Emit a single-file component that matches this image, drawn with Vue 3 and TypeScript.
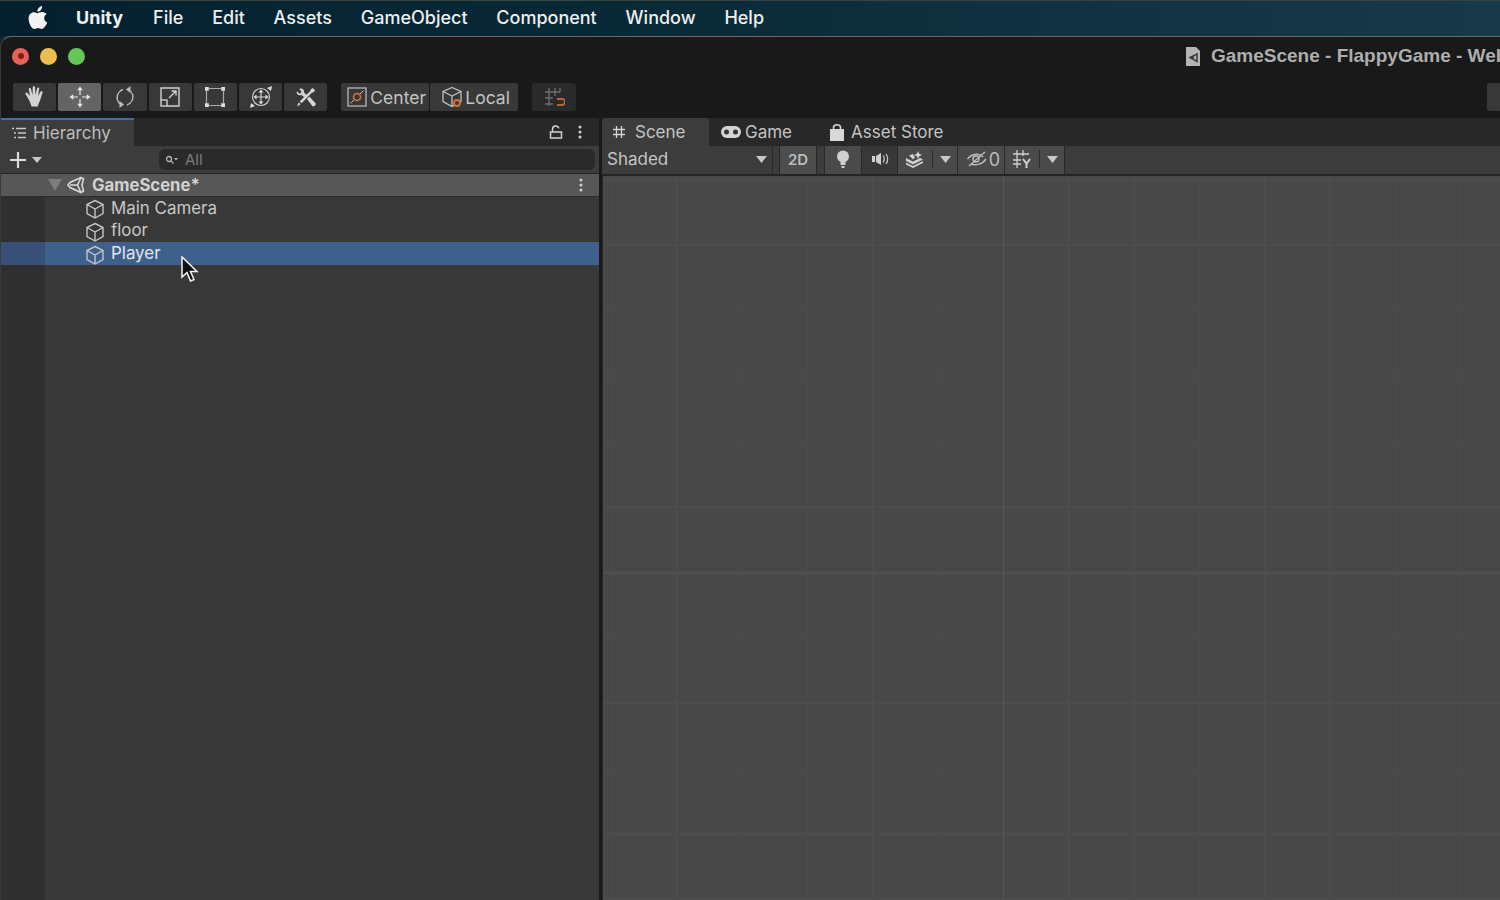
<script setup lang="ts">
const menus: string[] = ['File', 'Edit', 'Assets', 'GameObject', 'Component', 'Window', 'Help']
const rows: { name: string; selected: boolean }[] = [
  { name: 'Main Camera', selected: false },
  { name: 'floor', selected: false },
  { name: 'Player', selected: true },
]
</script>

<template>
  <div class="screen">
    <header class="menubar">
      <svg class="apple" viewBox="0 0 20 24" width="20" height="24">
        <path fill="#f2f4f4" d="M14.2 1c.1 1.500-.4 2.900-1.300 4-.9 1-2.200 1.800-3.500 1.700-.2-1.400.5-2.900 1.300-3.800C11.600 1.900 13 1.100 14.200 1zM18.700 8.900c-1.600 1-2.500 2.400-2.500 4.100 0 2 1.200 3.600 3 4.400-.5 1.400-1.100 2.700-2 3.900-1 1.400-2 2.600-3.500 2.600s-2-.9-3.700-.9-2.300.9-3.700.9c-1.500 0-2.500-1.300-3.500-2.700C1.500 19 .6 16.200.6 13.600c0-4.200 2.700-6.400 5.400-6.400 1.500 0 2.700 1 3.600 1s2.300-1.100 4-1.100c1.300 0 3.700.5 5.100 1.800z"/>
      </svg>
      <span class="menu-app">Unity</span>
      <span v-for="m in menus" :key="m" class="menu-item">{{ m }}</span>
    </header>

    <div class="window">
      <div class="titlebar">
        <div class="lights">
          <span class="light red"><i></i></span>
          <span class="light yellow"></span>
          <span class="light green"></span>
        </div>
        <div class="title">
          <svg viewBox="0 0 16 19" width="16" height="19">
            <path fill="#b4b4b4" d="M1 0h10l4 4v15H1z"/>
            <path fill="none" stroke="#3a3a3a" stroke-width="1.500" d="M12 7 5 10.500 12 14.500zM5 10.500h4"/>
          </svg>
          <span>GameScene - FlappyGame - WebGL</span>
        </div>
      </div>

      <div class="toolbar">
        <div class="tools">
          <button class="tool">
            <svg viewBox="0 0 24 24" width="24" height="24"><path fill="#d4d4d4" d="M5.500 14 2.600 9.300c-.8-1.400 1-2.300 1.900-1.200L7 11 5.800 4.300C5.500 2.700 7.700 2.300 8 3.900L9.500 10l.2-7.500c0-1.700 2.300-1.700 2.400 0l.4 7.500 1.500-6.400c.4-1.600 2.500-1.100 2.200.5L15 11l2.500-4.300c.8-1.400 2.700-.5 2 1L17 15.500c-.8 2.300-1.500 3.300-2.200 6H8.500c-.8-2.900-1.700-5.200-3-7.500z"/></svg>
          </button>
          <button class="tool active">
            <svg viewBox="0 0 24 24" width="24" height="24" fill="none" stroke="#e6e6e6" stroke-width="1.200"><path d="M12 5v5M12 14v5M5 12h5M14 12h5"/><path fill="#e6e6e6" stroke="none" d="M12 1.500l2.800 3.800H9.200zM12 22.500l-2.800-3.800h5.600zM1.500 12l3.800-2.800v5.600zM22.500 12l-3.800 2.800V9.200z"/></svg>
          </button>
          <button class="tool">
            <svg viewBox="0 0 24 24" width="24" height="24" fill="none" stroke="#bcbcbc" stroke-width="1.300"><path d="M9 20C4.500 18 2.500 12.500 5.500 8 6.700 6.300 8 5 10 4.500"/><path d="M15 4.500c4.500 2 6.500 7.500 3.500 12-1.200 1.700-2.500 3-4.500 3.500"/><path fill="#bcbcbc" stroke="none" d="M17.500 1v7l-4.500-3.500zM6.500 23v-7l4.500 3.500z"/></svg>
          </button>
          <button class="tool">
            <svg viewBox="0 0 22 22" width="22" height="22" fill="none" stroke="#d0d0d0" stroke-width="1.400"><path d="M2 14V2h18v18H8"/><rect x="2" y="14" width="6" height="6"/><path d="M10 12l7-7M12.500 5H17v4.500"/></svg>
          </button>
          <button class="tool">
            <svg viewBox="0 0 22 22" width="22" height="22" fill="none" stroke="#aaa" stroke-width="1.200"><path d="M5 2.500h12M5 19.500h12M2.500 5v12M19.500 5v12"/><g fill="#dcdcdc" stroke="none"><rect x="1" y="1" width="3.800" height="3.800"/><rect x="17.200" y="1" width="3.800" height="3.800"/><rect x="1" y="17.200" width="3.800" height="3.800"/><rect x="17.200" y="17.200" width="3.800" height="3.800"/></g></svg>
          </button>
          <button class="tool">
            <svg viewBox="0 0 24 24" width="24" height="24" fill="none" stroke="#cfcfcf" stroke-width="1.200"><circle cx="12" cy="12" r="8.500"/><path d="M12 6v12M6 12h12"/><path fill="#dcdcdc" stroke="none" d="M12 4.500l2.500 3h-5zM12 19.500l-2.500-3h5zM4.500 12l3-2.500v5zM19.500 12l-3 2.500v-5zM23 1l-1 5-4-3zM1 23l1-5 4 3z"/></svg>
          </button>
          <button class="tool">
            <svg viewBox="0 0 24 24" width="23" height="23"><path fill="#d4d4d4" d="M3 5.500l3 2.500 2-2-2.500-3C8 1.800 11 3.500 10.500 6.800L13 9l-2.500 2.500-2.800-2C4.700 10.500 2 8 3 5.500zM19.500 2l2.500 2.500-1.800 2.200-1.400.2L8 18l-2-2L17 5.300l.2-1.400zM13.500 13.500l2.500-2.500 6.500 7c1 1.500-1.700 4-3.200 3z"/><path fill="#d4d4d4" d="M5 17l2 2-4 2.500z"/></svg>
          </button>
        </div>

        <div class="pivot">
          <button class="pivot-btn">
            <svg viewBox="0 0 20 20" width="20" height="20" fill="none"><rect x="1" y="1" width="18" height="18" stroke="#c0c0c0" stroke-width="1.200"/><path d="M3.500 16.500l3.500-3.500M13 7l3.500-3.500" stroke="#c0c0c0"/><circle cx="10" cy="10" r="3.500" stroke="#d0743c" stroke-width="1.600"/></svg>
            <span>Center</span>
          </button>
          <button class="pivot-btn">
            <svg viewBox="0 0 22 22" width="22" height="22" fill="none" stroke="#c0c0c0" stroke-width="1.300"><path d="M11 1.500l9 4v10l-9 5-9-5v-10zM2 5.500l9 4.500 9-4.500M11 10v10.500"/><circle cx="16" cy="17" r="3" stroke="#d0743c" stroke-width="1.800" fill="#3c3c3c"/></svg>
            <span>Local</span>
          </button>
        </div>

        <button class="snap">
          <svg viewBox="0 0 22 22" width="22" height="22" fill="none" stroke="#6d6d6d" stroke-width="1.400"><path d="M2 6h15M2 12h8M2 18h8M6 2v18M12 2v8M17 2v4"/><path d="M14 13h5a2.500 2.500 0 0 1 0 6h-5" stroke="#b5673a" stroke-width="1.800"/></svg>
        </button>

        <div class="far-btn"></div>
      </div>

      <div class="panels">
        <section class="hierarchy">
          <div class="tabbar">
            <div class="tab tab-hier">
              <svg viewBox="0 0 16 12" width="16" height="12" stroke="#c8c8c8" stroke-width="1.300"><path d="M1 1.500h2M5 1.500h10M3 6h2M7 6h8M3 10.500h2M7 10.500h8"/></svg>
              <span>Hierarchy</span>
            </div>
            <div class="tab-tools">
              <svg viewBox="0 0 14 14" width="14" height="14" fill="none" stroke="#d0d0d0" stroke-width="1.500"><rect x="1.500" y="7" width="11" height="6"/><path d="M3.500 7V4a3.200 3.200 0 0 1 6.300-.6"/></svg>
              <svg class="dots" viewBox="0 0 4 14" width="4" height="14" fill="#d0d0d0"><circle cx="2" cy="2" r="1.500"/><circle cx="2" cy="7" r="1.500"/><circle cx="2" cy="12" r="1.500"/></svg>
            </div>
          </div>

          <div class="subbar">
            <div class="add">
              <svg viewBox="0 0 18 18" width="18" height="18" stroke="#dedede" stroke-width="2.200"><path d="M9 1v16M1 9h16"/></svg>
              <svg viewBox="0 0 10 6" width="10" height="6"><path fill="#c8c8c8" d="M0 0h10L5 6z"/></svg>
            </div>
            <div class="search">
              <svg viewBox="0 0 14 10" width="14" height="10" fill="none" stroke="#b4b4b4" stroke-width="1.300"><circle cx="4" cy="4" r="2.500"/><path d="M6 6l2.500 2.500"/><path fill="#b4b4b4" stroke="none" d="M9 3h4l-2 2.500z"/></svg>
              <span>All</span>
            </div>
          </div>

          <div class="scene-row">
            <svg class="fold" viewBox="0 0 14 12" width="14" height="12"><path fill="#7d7d7d" d="M0 0h14L7 12z"/></svg>
            <svg class="unity" viewBox="0 0 18 18" width="18" height="18" fill="none" stroke="#d8d8d8" stroke-width="1.600"><path d="M14 1.500 3 6.500 1 9l2 2.500 11 5 2.500-1.500L15 9l1.500-6z"/><path d="M3 9h7.500L14 1.500M10.500 9l3.500 7.500"/></svg>
            <span class="scene-name">GameScene*</span>
            <svg class="row-dots" viewBox="0 0 4 14" width="4" height="14" fill="#d0d0d0"><circle cx="2" cy="2" r="1.500"/><circle cx="2" cy="7" r="1.500"/><circle cx="2" cy="12" r="1.500"/></svg>
          </div>

          <div class="tree">
            <div v-for="r in rows" :key="r.name" class="row" :class="{ selected: r.selected }">
              <svg viewBox="0 0 20 20" width="20" height="20" fill="none" stroke="#c4c4c4" stroke-width="1.400"><path d="M10 1.500l8 4v9l-8 4.500-8-4.500v-9zM2 5.500l8 4.500 8-4.500M10 10v9"/></svg>
              <span>{{ r.name }}</span>
            </div>
          </div>

          <svg class="cursor" viewBox="0 0 18 27" width="18" height="27">
            <path fill="#111" stroke="#f4f4f4" stroke-width="1.500" d="M1 1v20l5-4.500 3.500 8.500 3.500-1.500-3.500-8H16z"/>
          </svg>
        </section>

        <section class="scene">
          <div class="tabbar right-tabs">
            <div class="tab tab-scene">
              <svg viewBox="0 0 14 14" width="14" height="14" stroke="#d4d4d4" stroke-width="1.300"><path d="M4.500 1v12M9.500 1v12M1 4.500h12M1 9.500h12"/></svg>
              <span>Scene</span>
            </div>
            <div class="tab tab-game">
              <svg viewBox="0 0 20 12" width="20" height="12"><rect x="0" y="0" width="20" height="12" rx="6" fill="#d4d4d4"/><circle cx="5.500" cy="6" r="2.500" fill="#333"/><circle cx="14.500" cy="6" r="2.500" fill="#333"/></svg>
              <span>Game</span>
            </div>
            <div class="tab tab-store">
              <svg viewBox="0 0 16 17" width="16" height="17"><path fill="#d8d8d8" d="M1 5h14v12H1z"/><path fill="none" stroke="#d8d8d8" stroke-width="1.600" d="M4.500 7V3.500a3.500 2.700 0 0 1 7 0V7"/></svg>
              <span>Asset Store</span>
            </div>
          </div>

          <div class="scene-tools">
            <div class="shaded">
              <span>Shaded</span>
              <svg viewBox="0 0 11 7" width="11" height="7"><path fill="#c8c8c8" d="M0 0h11L5.500 7z"/></svg>
            </div>
            <div class="sep first-sep"></div>
            <div class="stool s-2d"><b>2D</b></div>
            <div class="sep"></div>
            <div class="stool s-light raised">
              <svg viewBox="0 0 14 18" width="14" height="18"><circle cx="7" cy="6.500" r="6" fill="#cfcfcf"/><path fill="#cfcfcf" d="M4.500 12h5v3h-5zM5.500 16h3v2h-3z"/></svg>
            </div>
            <div class="stool s-audio">
              <svg viewBox="0 0 20 14" width="20" height="14" fill="none"><path fill="#d0d0d0" d="M1 4h3v6H1zM5 4l5-3v12L5 10z"/><path stroke="#d0d0d0" stroke-width="1.200" d="M12 3.500c1.500 2 1.500 5 0 7M15 2c2 3 2 7 0 10"/></svg>
            </div>
            <div class="stool s-fx raised">
              <svg viewBox="0 0 20 18" width="20" height="18" fill="#d0d0d0"><path d="M1 8l7 3.500L15 8l3 1.500L8 14.500 1 11zM1 12.500l7 3.500 10-5v2l-10 5-7-3.500z"/><path d="M13 1l1.200 2.800L17 5l-2.800 1.200L13 9l-1.200-2.800L9 5l2.800-1.200zM4 5.500l4-1.500 2 3.500-2 2z"/></svg>
              <i class="split"></i>
              <svg viewBox="0 0 11 7" width="11" height="7"><path fill="#c8c8c8" d="M0 0h11L5.500 7z"/></svg>
            </div>
            <div class="stool s-hide raised">
              <svg viewBox="0 0 22 16" width="22" height="16" fill="none" stroke="#bcbcbc" stroke-width="1.400"><path d="M1.500 8C5 3 13 1.500 17 6M5 13c4 1.500 11 1 15-5"/><circle cx="10" cy="8" r="3"/><path d="M3 15 19 1"/></svg>
              <span>0</span>
            </div>
            <div class="stool s-gizmo raised">
              <svg viewBox="0 0 20 20" width="20" height="20" fill="none" stroke="#d0d0d0" stroke-width="1.300"><path d="M5 1v18M11 1v6M1 5h16M1 11h8M1 15h8"/><path stroke-width="2" d="M11 10l3.500 4.500L18 10M14.500 14.500V19"/></svg>
              <i class="split"></i>
              <svg viewBox="0 0 11 7" width="11" height="7"><path fill="#c8c8c8" d="M0 0h11L5.500 7z"/></svg>
            </div>
          </div>

          <div class="viewport"></div>
        </section>
      </div>
    </div>
  </div>
</template>

<style>
html, body { margin: 0; padding: 0; background: #0c1e28; overflow: hidden; }
</style>

<style scoped>
.screen {
  width: 1500px;
  height: 900px;
  display: flex;
  flex-direction: column;
  overflow: hidden;
  font-family: Inter, "Liberation Sans", sans-serif;
  color: #c8c8c8;
  background: #0b2633;
}
button { border: 0; padding: 0; margin: 0; font: inherit; color: inherit; }
svg { display: block; flex: none; }

.menubar {
  height: 36px;
  flex: none;
  display: flex;
  align-items: center;
  padding-left: 28px;
  padding-bottom: 3px;
  background: linear-gradient(90deg, #04202e 0%, #0a2a38 45%, #173a48 100%);
  border-top: 1px solid #3a4144;
  color: #ecefef;
  font-size: 18px;
  font-weight: 500;
  box-sizing: border-box;
}
.apple { margin-right: 28px; }
.menu-app { font-weight: 700; margin-right: 30px; }
.menu-item { margin-right: 28.800px; }

.window {
  flex: 1;
  min-height: 0;
  display: flex;
  flex-direction: column;
  background: #191919;
  border-radius: 11px 0 0 0;
  border-top: 1px solid #6a6866;
  border-left: 1px solid #3a3a3a;
  box-sizing: border-box;
  overflow: hidden;
}

.titlebar {
  height: 46px;
  flex: none;
  display: flex;
  align-items: center;
  padding-left: 11px;
  padding-bottom: 8px;
  box-sizing: border-box;
}
.lights { display: flex; gap: 11px; }
.light {
  width: 17px;
  height: 17px;
  border-radius: 50%;
  display: flex;
  align-items: center;
  justify-content: center;
}
.light i { width: 6px; height: 6px; border-radius: 50%; background: #7a1f1c; }
.red { background: #e4625a; }
.yellow { background: #edbd50; }
.green { background: #63c655; }
.title {
  margin-left: 1100px;
  display: flex;
  align-items: center;
  gap: 10px;
  white-space: nowrap;
  font-size: 19px;
  font-weight: 700;
  font-family: "Liberation Sans", sans-serif;
  color: #aeaeae;
}

.toolbar {
  height: 35px;
  flex: none;
  display: flex;
  align-items: flex-start;
  padding-left: 12px;
}
.tools { display: flex; gap: 2px; }
.tool {
  width: 43.200px;
  height: 28px;
  background: #383838;
  display: flex;
  align-items: center;
  justify-content: center;
  border-radius: 2px;
}
.tool.active { background: #646464; }
.pivot { display: flex; margin-left: 14px; gap: 1px; }
.pivot-btn {
  height: 28px;
  width: 88px;
  background: #383838;
  display: flex;
  align-items: center;
  gap: 3px;
  padding-left: 6px;
  box-sizing: border-box;
  font-size: 17.500px;
  color: #c4c4c4;
  border-radius: 2px;
}
.pivot-btn + .pivot-btn { padding-left: 11px; gap: 2px; }
.snap {
  width: 44px;
  height: 28px;
  margin-left: 14px;
  background: #2a2a2a;
  border-radius: 3px;
  display: flex;
  align-items: center;
  justify-content: center;
}
.far-btn {
  margin-left: auto;
  width: 13px;
  height: 28px;
  background: #383838;
  border-radius: 3px 0 0 3px;
}

.panels { flex: 1; min-height: 0; display: flex; background: #191919; gap: 3px; }
.hierarchy {
  width: 598px;
  flex: none;
  display: flex;
  flex-direction: column;
  position: relative;
  background: linear-gradient(90deg, #2f2f2f 44px, #383838 44px);
  border-radius: 3px 3px 0 0;
}
.scene { flex: 1; min-width: 0; display: flex; flex-direction: column; }

.tabbar {
  height: 28px;
  flex: none;
  display: flex;
  background: #282828;
  font-size: 17px;
}
.tab { display: flex; align-items: center; height: 100%; box-sizing: border-box; }
.tab-hier {
  width: 133px;
  background: #3c3c3c;
  border-top: 2px solid #3f6fb0;
  padding-left: 10px;
  padding-bottom: 1px;
  gap: 6px;
  color: #bdbdbd;
}
.tab-tools { margin-left: auto; display: flex; align-items: center; gap: 15px; padding-right: 17px; }

.subbar {
  height: 28px;
  flex: none;
  display: flex;
  align-items: center;
  background: #3c3c3c;
  border-bottom: 1px solid #242424;
  box-sizing: border-box;
}
.add { display: flex; align-items: center; gap: 5px; padding-left: 8px; width: 158px; box-sizing: border-box; }
.search {
  width: 436px;
  height: 21px;
  border-radius: 6px;
  background: #2a2a2a;
  display: flex;
  align-items: center;
  gap: 6px;
  padding-left: 6px;
  box-sizing: border-box;
  font-size: 15px;
  color: #7c7c7c;
}

.scene-row {
  height: 23px;
  flex: none;
  display: flex;
  align-items: center;
  background: #575757;
  border-bottom: 1px solid #2c2c2c;
  box-sizing: border-box;
  padding-left: 47px;
}
.unity { margin-left: 5px; margin-right: 7px; }
.scene-name { font-weight: 700; font-size: 16.700px; color: #d2d2d2; }
.row-dots { margin-left: auto; margin-right: 16px; }

.tree { display: flex; flex-direction: column; }
.row {
  height: 22.500px;
  display: flex;
  align-items: center;
  padding-left: 84px;
  gap: 6px;
  font-size: 16.900px;
  color: #c8c8c8;
}
.row svg { margin-top: 2px; }
.row span { margin-top: -1px; }
.row.selected {
  height: 23px;
  background: linear-gradient(90deg, #384f78 44px, #40608c 44px);
  color: #e2e6ec;
}

.cursor { position: absolute; left: 180px; top: 138px; }

.tab-scene {
  width: 107px;
  background: #3c3c3c;
  padding-left: 10px;
  gap: 9px;
  color: #c4c4c4;
  border-radius: 3px 3px 0 0;
}
.tab-game { padding-left: 12px; gap: 4px; color: #c4c4c4; }
.tab-store { padding-left: 37px; gap: 6px; color: #c4c4c4; }

.scene-tools {
  height: 30px;
  flex: none;
  display: flex;
  align-items: stretch;
  background: #3c3c3c;
  border-bottom: 2px solid #242424;
  box-sizing: border-box;
}
.shaded {
  width: 170px;
  display: flex;
  align-items: center;
  justify-content: space-between;
  padding: 0 5px 2px 5px;
  box-sizing: border-box;
  font-size: 17px;
  color: #c4c4c4;
}
.sep { width: 9px; border-left: 1px solid #282828; border-right: 1px solid #282828; box-sizing: border-box; flex: none; }
.first-sep { width: 8px; }
.stool {
  display: flex;
  align-items: center;
  justify-content: center;
  padding-bottom: 2px;
  box-sizing: border-box;
  border-right: 1px solid #282828;
}
.raised { background: #4a4a4a; }
.s-2d { width: 36px; background: #4d4d4d; font-size: 15px; color: #bcbcbc; border-right: 0; }
.s-2d b { font-weight: 600; }
.s-light { width: 37px; }
.s-audio { width: 36px; background: #383838; padding-left: 2px; }
.s-fx { width: 60px; gap: 7px; }
.s-hide { width: 47px; gap: 1px; padding-left: 4px; font-size: 18px; color: #bcbcbc; }
.s-gizmo { width: 60px; gap: 7px; }
.split { width: 1px; height: 18px; background: #2c2c2c; }

.viewport {
  flex: 1;
  min-height: 0;
  background-color: #484848;
  background-image:
    linear-gradient(90deg, transparent 400px, #565656 400px, #565656 401.500px, transparent 401.500px),
    linear-gradient(180deg, transparent 396.500px, #505050 396.500px, #505050 398px, transparent 398px),
    repeating-linear-gradient(90deg, #4c4c4c 0, #4c4c4c 1.500px, transparent 1.500px, transparent 65.300px),
    repeating-linear-gradient(180deg, #4c4c4c 0, #4c4c4c 1.500px, transparent 1.500px, transparent 65.400px);
  background-position: 0 0, 0 0, 8px 0, 0 3px;
  border-left: 1px solid #252525;
}
</style>
